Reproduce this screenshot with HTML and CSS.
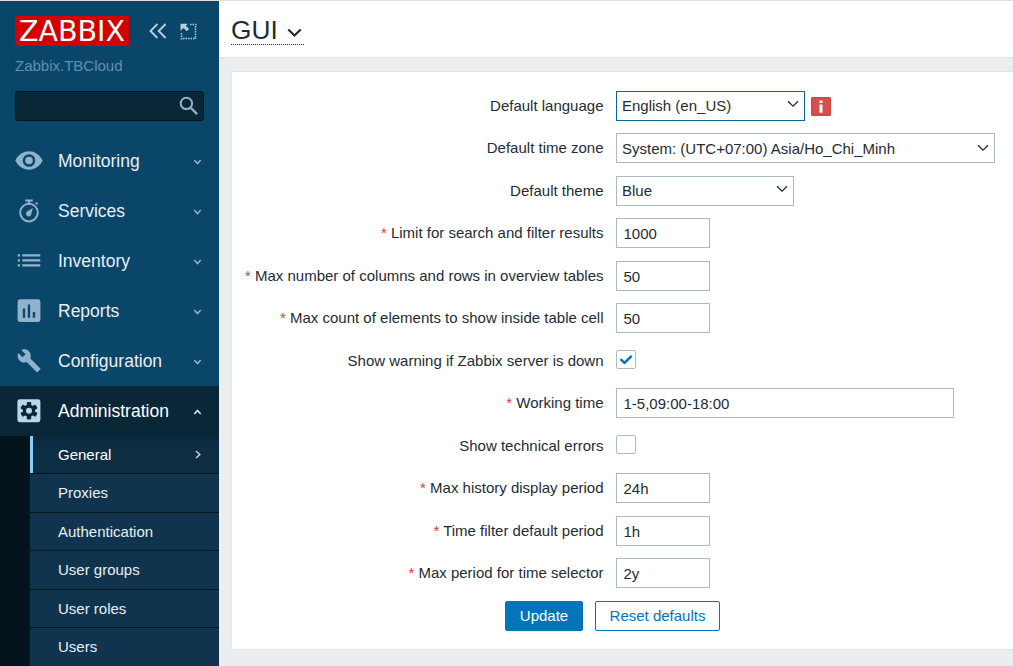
FILE: index.html
```
<!DOCTYPE html>
<html lang="en">
<head>
<meta charset="utf-8">
<title>Configuration of GUI</title>
<link rel="stylesheet" href="styles.css">
</head>
<body>
<div class="app">
<aside class="sidebar">
  <div class="brand">
    <div class="logo"><span>ZABBIX</span></div>
    <svg class="collapse" width="18" height="16" viewBox="0 0 18 16"><path d="M8.4 1 1.5 8l6.900 7M16.600 1 9.700 8l6.900 7" fill="none" stroke="#b5cfdf" stroke-width="1.900"/></svg>
    <svg class="kiosk" width="18" height="18" viewBox="0 0 18 18"><path d="M10 1.500h7M15.500 3v13M1.500 10v7M3 15.500h13" fill="none" stroke="#b5cfdf" stroke-width="1.500" stroke-dasharray="1.500 1"/><path d="M.500.700h7.300L5.900 2.700l3.200 3.300-2.300 2.300-3.300-3.200L.500 7.800z" fill="#b5cfdf"/></svg>
  </div>
  <div class="server">Zabbix.TBCloud</div>
  <div class="search"><svg width="20" height="20" viewBox="0 0 20 20"><circle cx="7.400" cy="7.400" r="5.700" fill="none" stroke="#8fb3cb" stroke-width="2"/><path d="m11.500 11.500 6.600 6.600" stroke="#8fb3cb" stroke-width="2.400"/></svg></div>
  <nav class="menu">
    <div class="item"><svg class="icon" viewBox="0 0 28 28"><path fill-rule="evenodd" d="M.3 13.500C3.200 7.700 8.300 4.300 14 4.300s10.800 3.400 13.700 9.200C24.800 19.300 19.700 22.700 14 22.700S3.200 19.300.3 13.500ZM14 7.200a6.300 6.300 0 1 0 0 12.600 6.300 6.300 0 0 0 0-12.600Z"/><circle cx="14" cy="13.500" r="3.800"/></svg><span>Monitoring</span><svg class="arrow" viewBox="0 0 9 6"><path d="m1.300 1 3.200 3.600L7.700 1"/></svg></div>
    <div class="item"><svg class="icon" viewBox="0 0 28 28"><circle cx="14" cy="15.600" r="8.800" fill="none" stroke="#8fb3cb" stroke-width="2"/><path d="M10.200 2.500h7.600v2.100h-2.600v2.800h-2.400V4.600h-2.600zM20 6.300l1.400-1.400 1.800 1.800L21.800 8zM17.800 11l-1.500 6.200a2.700 2.700 0 1 1-3.700-3z"/></svg><span>Services</span><svg class="arrow" viewBox="0 0 9 6"><path d="m1.300 1 3.200 3.600L7.700 1"/></svg></div>
    <div class="item"><svg class="icon" viewBox="0 0 28 28"><path d="M2.700 7.300H5v2.300H2.700zM7.300 7.300h18v2.300h-18zM2.700 12.300H5v2.300H2.700zM7.300 12.300h18v2.300h-18zM2.700 17.300H5v2.300H2.700zM7.300 17.300h18v2.300h-18z"/></svg><span>Inventory</span><svg class="arrow" viewBox="0 0 9 6"><path d="m1.300 1 3.200 3.600L7.700 1"/></svg></div>
    <div class="item"><svg class="icon" viewBox="0 0 28 28"><path fill-rule="evenodd" d="M5 2.300h18a2.400 2.400 0 0 1 2.400 2.400v18a2.400 2.400 0 0 1-2.400 2.400H5a2.400 2.400 0 0 1-2.400-2.400v-18A2.400 2.400 0 0 1 5 2.300Zm2.800 9.200v9.200h2.300v-9.200zm5-4.100v13.300h2.300V7.400zm5 7.700v5.600h2.300v-5.600z"/></svg><span>Reports</span><svg class="arrow" viewBox="0 0 9 6"><path d="m1.300 1 3.200 3.600L7.700 1"/></svg></div>
    <div class="item"><svg class="icon" viewBox="0 0 28 28"><path d="M24.800 21.700 14.700 11.600c1-2.500.400-5.500-1.600-7.500-2.200-2.100-5.300-2.500-7.900-1.400l4.500 4.500-3.200 3.100L2 5.900C.8 8.500 1.300 11.700 3.400 13.800c2 2.100 4.900 2.600 7.400 1.600l10.100 10.100c.5.500 1.200.5 1.600 0l2.300-2.300c.5-.4.500-1.100 0-1.500Z" transform="translate(1.300 .3) scale(.96)"/></svg><span>Configuration</span><svg class="arrow" viewBox="0 0 9 6"><path d="m1.300 1 3.200 3.600L7.700 1"/></svg></div>
    <div class="item open"><svg class="icon" viewBox="0 0 28 28"><rect x="2.400" y="2.200" width="23" height="23" rx="2.400"/><g transform="translate(14 13.700)"><circle r="6.200" fill="#0a2738"/><g fill="#0a2738"><rect x="-2.200" y="-8.700" width="4.400" height="17.400" rx=".8"/><rect x="-2.200" y="-8.700" width="4.400" height="17.400" rx=".8" transform="rotate(60)"/><rect x="-2.200" y="-8.700" width="4.400" height="17.400" rx=".8" transform="rotate(120)"/></g><circle r="3"/></g></svg><span>Administration</span><svg class="arrow" viewBox="0 0 9 6"><path d="m1.300 5 3.200-3.600L7.700 5"/></svg></div>
  </nav>
  <nav class="submenu">
    <div class="sub current"><span>General</span><svg width="6" height="9" viewBox="0 0 6 9"><path d="m1 1 3.800 3.500L1 8" fill="none" stroke="#c3d2dc" stroke-width="1.500"/></svg></div>
    <div class="sub">Proxies</div>
    <div class="sub">Authentication</div>
    <div class="sub">User groups</div>
    <div class="sub">User roles</div>
    <div class="sub">Users</div>
  </nav>
</aside>
<main class="main">
  <header class="header"><h1 class="title">GUI<svg width="15" height="10" viewBox="0 0 15 10"><path d="m1.300 1.500 6.200 6 6.200-6" fill="none" stroke="#1f2c33" stroke-width="2.200"/></svg></h1></header>
  <form class="card">
    <div class="row"><label>Default language</label><div class="select language focused">English (en_US)<svg class="chevron" viewBox="0 0 12 8"><path d="m1 1.200 5 5 5-5"/></svg></div><span class="info"><svg width="20" height="19" viewBox="0 0 20 19"><path d="M8.500 3.400h3v2.500h-3zM8.500 7.600h3v8.200h-3z" fill="#fff"/></svg></span></div>
    <div class="row"><label>Default time zone</label><div class="select zone">System: (UTC+07:00) Asia/Ho_Chi_Minh<svg class="chevron" viewBox="0 0 12 8"><path d="m1 1.200 5 5 5-5"/></svg></div></div>
    <div class="row"><label>Default theme</label><div class="select theme">Blue<svg class="chevron" viewBox="0 0 12 8"><path d="m1 1.200 5 5 5-5"/></svg></div></div>
    <div class="row"><label class="required">Limit for search and filter results</label><input class="input" value="1000"></div>
    <div class="row"><label class="required">Max number of columns and rows in overview tables</label><input class="input" value="50"></div>
    <div class="row"><label class="required">Max count of elements to show inside table cell</label><input class="input" value="50"></div>
    <div class="row"><label>Show warning if Zabbix server is down</label><span class="check"><svg width="18" height="17" viewBox="0 0 18 17"><path d="m3.500 8.200 4 3.700 7.200-7" fill="none" stroke="#0275b8" stroke-width="2.500"/></svg></span></div>
    <div class="row"><label class="required">Working time</label><input class="input wide" value="1-5,09:00-18:00"></div>
    <div class="row"><label>Show technical errors</label><span class="check"></span></div>
    <div class="row"><label class="required">Max history display period</label><input class="input" value="24h"></div>
    <div class="row"><label class="required">Time filter default period</label><input class="input" value="1h"></div>
    <div class="row"><label class="required">Max period for time selector</label><input class="input" value="2y"></div>
    <div class="actions"><button type="button" class="button primary">Update</button><button type="button" class="button">Reset defaults</button></div>
  </form>
</main>
</div>
</body>
</html>
```

FILE: styles.css
```
* { box-sizing: border-box; }
body {
  margin: 0;
  height: 666px;
  overflow: hidden;
  background: #ebeef0;
  color: #1f2c33;
  font: 15px/20px Arial, "Liberation Sans", sans-serif;
}
.app { display: flex; height: 666px; border-top: 1px solid #dfdfdf; }
.sidebar {
  flex: none;
  display: flex;
  flex-direction: column;
  width: 219px;
  background: #0a466a;
  color: #e8eff3;
}
.brand { display: flex; padding: 15px 0 0 15px; height: 45px; }
.logo {
  display: flex;
  justify-content: center;
  width: 114px;
  height: 30px;
  background: #d40000;
  color: #fff;
  font: 28.500px/31px "DejaVu Sans", sans-serif;
}
.collapse { margin: 7px 0 0 20px; }
.kiosk { margin: 7px 0 0 13px; }
.server { margin: 10px 0 0 15px; color: #638fac; }
.search {
  display: flex;
  justify-content: flex-end;
  flex: none;
  width: 189px;
  height: 30px;
  margin: 15px 0 0 15px;
  padding: 4px 4px 0 0;
  border: 1px solid #06131c;
  border-radius: 3px;
  background: #0a2738;
}
.menu { flex: none; padding-top: 15px; }
.item {
  display: flex;
  align-items: center;
  height: 50px;
  padding: 0 17px 0 15px;
  font-size: 17.5px;
}
.item span { flex: 1; }
.icon { width: 28px; height: 28px; margin-right: 15px; fill: #8fb3cb; }
.arrow { width: 9px; height: 6px; margin-top: 2px; fill: none; stroke: #8fb3cb; stroke-width: 1.5; }
.open { background: #0a2738; color: #fff; }
.open .icon { fill: #b9d7ea; }
.open .arrow { stroke: #dce8ef; }
.submenu { flex: 1; min-height: 0; overflow: hidden; border-left: 30px solid #04141d; background: #10344d; }
.sub {
  display: flex;
  align-items: center;
  justify-content: space-between;
  height: 38.5px;
  padding: 0 18px 0 28px;
  border-top: 1px solid #05151f;
}
.current {
  height: 37.300px;
  padding-left: 25px;
  border-top: 0;
  border-left: 3px solid #88ccf7;
  background: linear-gradient(#0a2738, #0c2d42 7px);
  color: #fff;
}
.main { flex: 1; min-width: 0; }
.header {
  height: 57px;
  padding: 14px 0 0 12px;
  border-bottom: 1px solid #dfe4e7;
  background: #fff;
}
.title {
  display: inline-flex;
  align-items: center;
  gap: 9px;
  height: 30px;
  margin: 0;
  padding-right: 2px;
  border-bottom: 1px dotted #1f2c33;
  font-size: 26.250px;
  font-weight: 400;
}
.title svg { margin-top: 6px; }
.card {
  height: 579px;
  margin: 13px 0 0 12px;
  padding-top: 18.900px;
  border: 1px solid #dfe4e7;
  border-right: 0;
  background: #fff;
}
.row { display: flex; height: 42.500px; }
.row label { flex: none; width: 371.500px; margin-right: 12.500px; padding-top: 5px; text-align: right; white-space: nowrap; }
.required::before { content: "* "; color: #e33734; }
.select, .input {
  width: 94px;
  height: 30px;
  border: 1px solid #acbbc2;
  background: #fff;
  color: #1f2c33;
  font: inherit;
}
.input { padding: 1px 6px 0 6.500px; border-radius: 0; outline: 0; }
.select { display: flex; justify-content: space-between; padding: 5px 5px 0; white-space: nowrap; }
.language { width: 189px; }
.zone { width: 379px; }
.theme { width: 178px; }
.wide { width: 338px; }
.select.focused { padding-top: 4px; border-color: #0b6598; }
.select.theme { padding-top: 4px; }
.chevron { width: 12px; height: 8px; margin-top: 4.500px; fill: none; stroke: #1f2c33; stroke-width: 1.300; }
.info { width: 20px; height: 19px; margin: 6px 0 0 6px; border-radius: 2px; background: #d64e4e; box-shadow: inset 0 0 0 1px #d04142; }
.info svg { display: block; }
.check { width: 20px; height: 19px; margin-top: 4px; border: 1px solid #acbbc2; border-radius: 2px; }
.check svg { display: block; }
.actions { display: flex; gap: 12px; padding-left: 273px; }
.button {
  width: 125px;
  height: 30px;
  padding: 0;
  border: 1px solid #0275b8;
  border-radius: 2px;
  background: #fff;
  color: #0275b8;
  font: inherit;
}
.primary { width: 78px; background: #0275b8; color: #fff; }
```
